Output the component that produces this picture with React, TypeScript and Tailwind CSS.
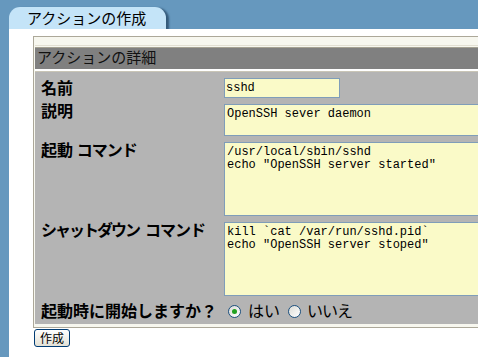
import type { ReactNode } from 'react'

const jp = "font-['Noto_Sans_CJK_JP',sans-serif]"
const mono = "font-['Liberation_Mono',monospace]"

function Radio({ checked }: { checked?: boolean }) {
	return (
		<span className="w-[13px] h-[13px] rounded-full border border-[#1c5180] bg-gradient-to-br from-[#dcdcd6] to-white flex items-center justify-center shrink-0">
			{checked && <span className="w-[5px] h-[5px] rounded-full bg-[#21a121]" />}
		</span>
	)
}

function Row({
	label,
	children,
	className = '',
	labelClass = '',
}: {
	label: ReactNode
	children: ReactNode
	className?: string
	labelClass?: string
}) {
	return (
		<div className={`flex items-start ${className}`}>
			<div className={`w-[189px] shrink-0 pl-[6px] text-[16px] font-semibold text-black ${labelClass}`}>
				{label}
			</div>
			{children}
		</div>
	)
}

const fieldClass = `block border border-[#7f9db9] bg-[#fafac8] text-black text-[12px] ${mono} outline-none resize-none overflow-hidden`

export default function App() {
	return (
		<div className={`w-[478px] h-[357px] bg-[#6698be] overflow-hidden ${jp}`}>
			<div className="pt-[7px] pl-[9px]">
				<div className="w-[157px] h-[22px] bg-[#c4e4f8] rounded-t-[11px] shadow-[3px_1px_2px_#345a7a] pl-[18px] text-[15px] leading-[21px] text-black">
					アクションの作成
				</div>
			</div>
			<div className="ml-[9px] h-[328px] bg-white pt-[7px] pl-[24px]">
				<div className="w-[560px] border-t border-l border-b border-[#aca899] bg-[#f7f7ef] pl-[1px] pt-[8px] pb-[3px]">
					<div className="border-t border-[#e2dfd2] pt-[1px]">
						<div className="border-t border-[#a5a293] bg-[#808080] h-[22px] pl-[2px] pt-[1px] text-[15px] leading-[15px] text-[#111]">
							アクションの詳細
						</div>
					</div>
					<div className="h-[2px] bg-white" />
					<div className="h-[1px] bg-[#c9c5b6]" />
					<div className="bg-[#b4b4b4] pt-[6px] h-[252px]">
						<Row label="名前" labelClass="leading-[19px]">
							<input
								readOnly
								defaultValue="sshd"
								className={`${fieldClass} w-[116px] h-[20px] px-[1px]`}
							/>
						</Row>
						<Row label="説明" className="mt-[6px]" labelClass="leading-[16px] -mt-[2px]">
							<textarea
								readOnly
								defaultValue="OpenSSH sever daemon"
								className={`${fieldClass} w-[300px] h-[32px] px-[2px] pt-[3px] leading-[13px]`}
							/>
						</Row>
						<Row
							label={
								<>
									起動 <span className="tracking-[-1px]">コマンド</span>
								</>
							}
							className="mt-[6px]"
							labelClass="leading-[16px] -mt-[1px]"
						>
							<textarea
								readOnly
								defaultValue={'/usr/local/sbin/sshd\necho "OpenSSH server started"'}
								className={`${fieldClass} w-[300px] h-[74px] px-[2px] pt-[3px] leading-[13px]`}
							/>
						</Row>
						<Row
							label={
								<>
									<span className="tracking-[-2px]">シャットダウン</span>
									<span className="ml-[6px] tracking-[-1px]">コマンド</span>
								</>
							}
							className="mt-[6px]"
							labelClass="leading-[16px] -mt-[1px]"
						>
							<textarea
								readOnly
								defaultValue={'kill `cat /var/run/sshd.pid`\necho "OpenSSH server stoped"'}
								className={`${fieldClass} w-[300px] h-[74px] px-[2px] pt-[3px] leading-[13px]`}
							/>
						</Row>
						<div className="flex items-center h-[28px]">
							<div className="w-[193px] shrink-0 pl-[6px] text-[16px] font-semibold leading-[16px] text-black">
								起動時に開始しますか？
							</div>
							<div className="flex items-center text-[16px] leading-[16px] text-black mt-[3px]">
								<Radio checked />
								<span className="ml-[7px] -mt-[3px]">はい</span>
								<span className="ml-[8px]">
									<Radio />
								</span>
								<span className="ml-[6px] -mt-[3px] tracking-[-1px]">いいえ</span>
							</div>
						</div>
					</div>
				</div>
				<button
					type="button"
					className="mt-[1px] ml-[1px] w-[36px] h-[18px] rounded-[3px] border border-[#003c74] bg-gradient-to-b from-white to-[#e3e1d6] text-[12px] leading-[16px] text-black flex items-center justify-center"
				>
					作成
				</button>
			</div>
		</div>
	)
}
